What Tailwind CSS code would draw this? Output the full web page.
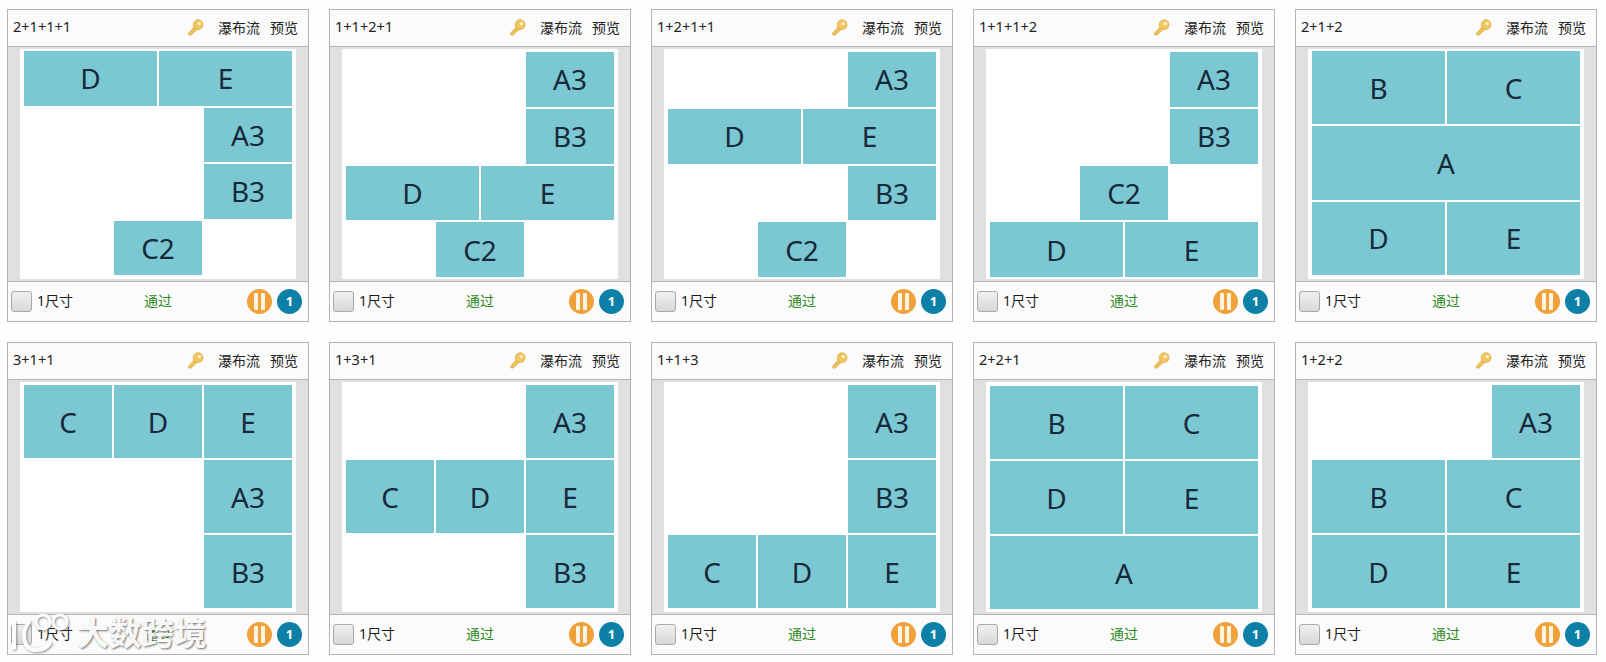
<!DOCTYPE html>
<html lang="en">
<head>
  <meta charset="UTF-8" />
  <title>Layouts</title>
  <script src="https://cdn.jsdelivr.net/npm/@tailwindcss/browser@4"></script>
</head>
<body class="bg-[#fefefe] font-['Noto_Sans','Noto_Sans_CJK_SC',sans-serif] overflow-hidden">
  <div class="relative w-[1606px] h-[662px]">
    <!-- Cards -->
    <div id="cards" class="grid grid-cols-[repeat(5,302px)] gap-x-[20px] gap-y-[20px] pl-[7px] pt-[9px]"></div>

    <!-- Watermark -->
    <div class="absolute left-[10px] top-[612px] flex items-center gap-[5px] pointer-events-none">
      <svg width="62" height="42" viewBox="0 0 62 42" fill="none" stroke="#ffffff" class="opacity-90 drop-shadow-[1px_1px_1px_rgba(90,90,90,0.7)]">
        <path d="M4 11v25" stroke-width="4" stroke-linecap="round" />
        <path d="M19 10C11 20 12 38 27 38c6 0 10-2 13-7" stroke-width="4" stroke-linecap="round" />
        <circle cx="33" cy="10" r="7" stroke-width="3" />
        <circle cx="50" cy="10" r="7" stroke-width="3" />
      </svg>
      <span class="text-[32px] leading-[42px] font-bold tracking-[0.5px] text-white/95 [text-shadow:1px_1px_2px_rgba(80,80,80,0.8)]">大数跨境</span>
    </div>
  </div>

  <script>
    const padA = 'pt-[2px] pb-[4px]';
    const padB = 'pt-[3px] pb-[2px]';
    const padC = 'pt-[3px] pb-[4px]';
    const padD = 'pt-[4px] pb-[3px]';

    // label, row, first column, column span (6 column grid)
    const cards = [
      { title: '2+1+1+1', rows: 4, pad: padA, tiles: [['D',1,1,3],['E',1,4,3],['A3',2,5,2],['B3',3,5,2],['C2',4,3,2]] },
      { title: '1+1+2+1', rows: 4, pad: padB, tiles: [['A3',1,5,2],['B3',2,5,2],['D',3,1,3],['E',3,4,3],['C2',4,3,2]] },
      { title: '1+2+1+1', rows: 4, pad: padB, tiles: [['A3',1,5,2],['D',2,1,3],['E',2,4,3],['B3',3,5,2],['C2',4,3,2]] },
      { title: '1+1+1+2', rows: 4, pad: padB, tiles: [['A3',1,5,2],['B3',2,5,2],['C2',3,3,2],['D',4,1,3],['E',4,4,3]] },
      { title: '2+1+2', rows: 3, pad: padA, tiles: [['B',1,1,3],['C',1,4,3],['A',2,1,6],['D',3,1,3],['E',3,4,3]] },
      { title: '3+1+1', rows: 3, pad: padC, tiles: [['C',1,1,2],['D',1,3,2],['E',1,5,2],['A3',2,5,2],['B3',3,5,2]] },
      { title: '1+3+1', rows: 3, pad: padC, tiles: [['A3',1,5,2],['C',2,1,2],['D',2,3,2],['E',2,5,2],['B3',3,5,2]] },
      { title: '1+1+3', rows: 3, pad: padC, tiles: [['A3',1,5,2],['B3',2,5,2],['C',3,1,2],['D',3,3,2],['E',3,5,2]] },
      { title: '2+2+1', rows: 3, pad: padD, tiles: [['B',1,1,3],['C',1,4,3],['D',2,1,3],['E',2,4,3],['A',3,1,6]] },
      { title: '1+2+2', rows: 3, pad: padC, tiles: [['A3',1,5,2],['B',2,1,3],['C',2,4,3],['D',3,1,3],['E',3,4,3]] }
    ];

    const keyIcon = `
      <svg width="17" height="17" viewBox="0 0 18 18" class="block">
        <path d="M1.5 15 L8.5 7.5 L11.5 10.2 L4.5 17 C2.8 17.6 1 16.6 1.5 15Z" fill="#eebf55" stroke="#d5a544" stroke-width="0.6" />
        <circle cx="11.8" cy="6" r="5.2" fill="#f2c762" stroke="#d9a63e" stroke-width="0.7" />
        <circle cx="13" cy="4.8" r="1.7" fill="#fff3cf" />
      </svg>`;

    const root = document.getElementById('cards');

    cards.forEach(card => {
      const el = document.createElement('div');
      el.className = 'w-[302px] h-[313px] flex flex-col border border-[#b4b4b4] bg-[#fbfbfb]';
      el.innerHTML = `
        <div class="h-[36px] shrink-0 flex items-center pl-[5px] pr-[10px] pb-[2px] text-[14px] text-[#222]">
          <span class="flex-1 text-[14.5px]">${card.title}</span>
          <span class="mr-[14px]">${keyIcon}</span>
          <span class="mr-[10px]">瀑布流</span>
          <span>预览</span>
        </div>
        <div class="h-[236px] shrink-0 border-y border-[#b4b4b4] bg-[#e0e0e0] px-[12px] py-[2px]">
          <div class="tiles h-[230px] bg-white pl-[4px] pr-[4px] grid grid-cols-6 gap-[2px] ${card.pad}"></div>
        </div>
        <div class="flex-1 relative flex items-center pl-[3px] pr-[6px] text-[14px]">
          <span class="w-[21px] h-[21px] rounded-[3px] border border-[#a9a9a9] bg-gradient-to-b from-[#f0f0f0] to-[#d8d8d8]"></span>
          <span class="ml-[5px] mb-[2px] text-[#1c1c1c]">1尺寸</span>
          <span class="absolute left-[136px] top-[8px] text-[#2f8a1e]">通过</span>
          <span class="ml-auto w-[25px] h-[25px] rounded-full bg-[#efa23a] flex items-center justify-center gap-[3px]">
            <i class="block w-[4px] h-[17px] rounded-[1px] bg-[#fdf3e2]"></i>
            <i class="block w-[4px] h-[17px] rounded-[1px] bg-[#fdf3e2]"></i>
          </span>
          <span class="ml-[5px] w-[25px] h-[25px] rounded-full bg-[#0d80a8] text-white text-[13px] font-bold flex items-center justify-center">1</span>
        </div>`;

      const grid = el.querySelector('.tiles');
      grid.style.gridTemplateRows = `repeat(${card.rows}, 1fr)`;
      card.tiles.forEach(([label, row, col, span]) => {
        const tile = document.createElement('div');
        tile.className = 'min-h-0 bg-[#7cc8d2] text-[#17293a] text-[28px] leading-none flex items-center justify-center';
        tile.style.gridRow = row;
        tile.style.gridColumn = `${col} / span ${span}`;
        tile.textContent = label;
        grid.appendChild(tile);
      });
      root.appendChild(el);
    });
  </script>
</body>
</html>
